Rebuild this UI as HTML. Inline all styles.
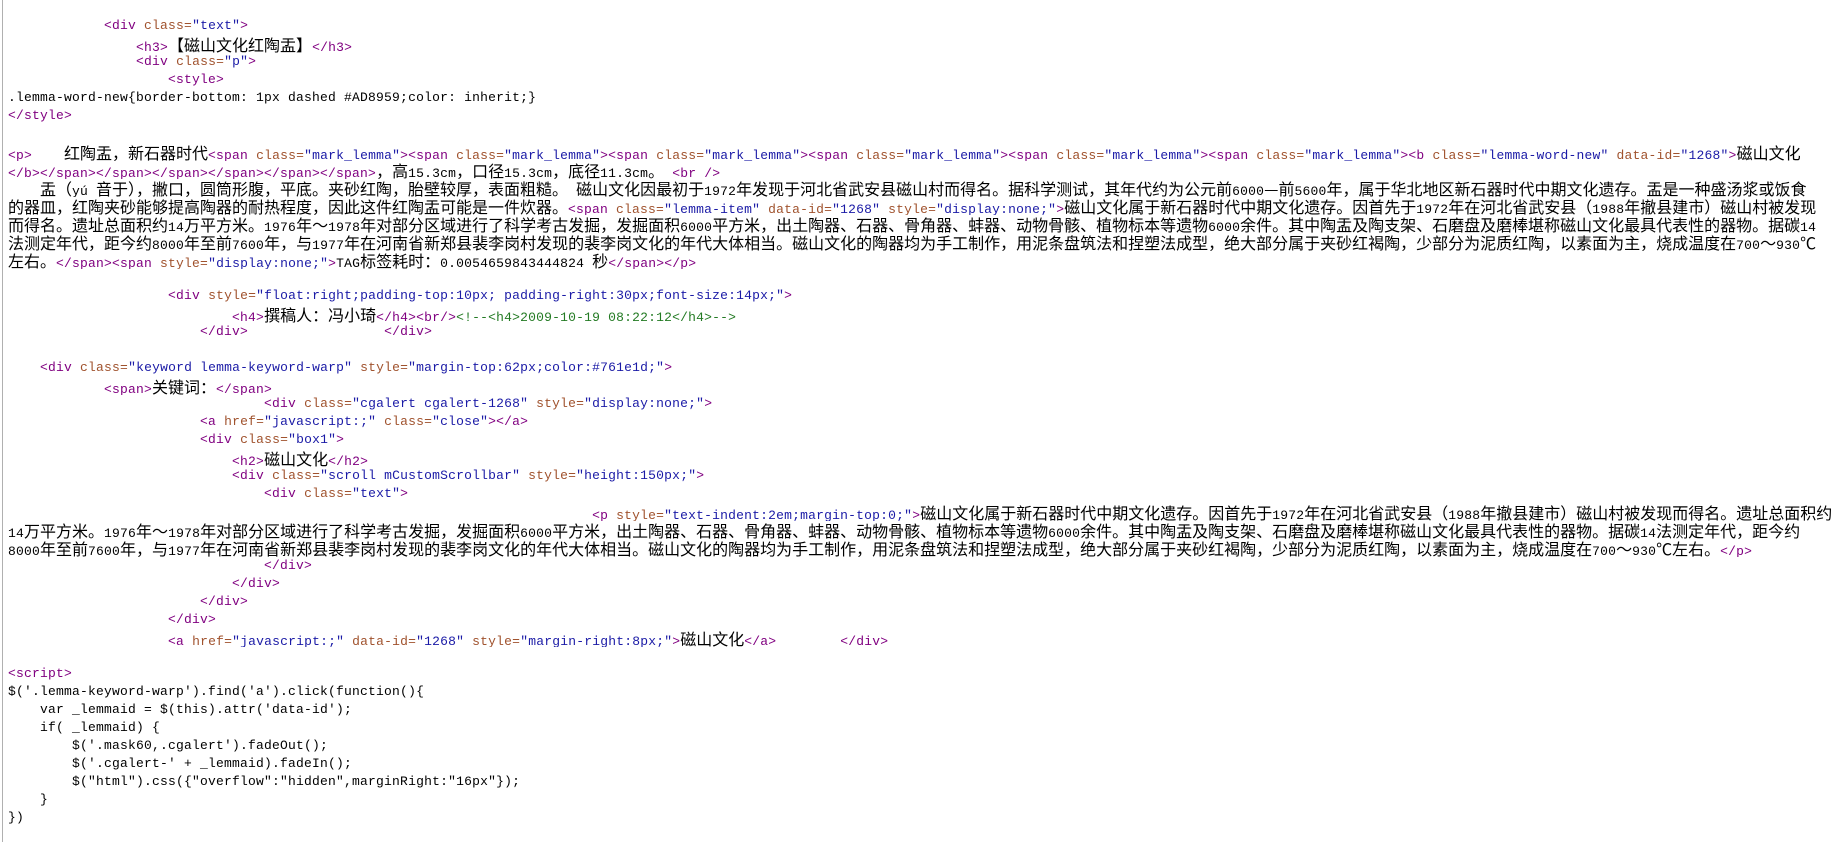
<!DOCTYPE html>
<html><head><meta charset="utf-8">
<style>
html,body{margin:0;padding:0;background:#fff;width:1844px;height:842px;overflow:hidden}
body{border-left:1px solid #b0b0b0;margin-left:2px;padding-top:17px;box-sizing:border-box}
.l{white-space:pre;height:18px;line-height:18px;font-family:"Liberation Mono",monospace;font-size:13px;letter-spacing:0.2px;color:#000;padding-left:5px;overflow:hidden}
u,s,b,em,i{text-decoration:none;font-weight:normal;font-style:normal}
u{color:#800080}
s{color:#a0522d}
b{color:#1a1aa6}
em{color:#237a23}
i{font-family:"Noto Sans CJK SC","WenQuanYi Zen Hei",sans-serif;font-size:16px;letter-spacing:0}
</style></head><body>
<div class="l">            <u>&lt;div</u> <s>class=</s><b>"text"</b><u>&gt;</u></div>
<div class="l">                <u>&lt;h3&gt;</u><i>【磁山文化红陶盂】</i><u>&lt;/h3&gt;</u></div>
<div class="l">                <u>&lt;div</u> <s>class=</s><b>"p"</b><u>&gt;</u></div>
<div class="l">                    <u>&lt;style&gt;</u></div>
<div class="l">.lemma-word-new{border-bottom: 1px dashed #AD8959;color: inherit;}</div>
<div class="l"><u>&lt;/style&gt;</u></div>
<div class="l"> </div>
<div class="l"><u>&lt;p&gt;</u>    <i>红陶盂，新石器时代</i><u>&lt;span</u> <s>class=</s><b>"mark_lemma"</b><u>&gt;&lt;span</u> <s>class=</s><b>"mark_lemma"</b><u>&gt;&lt;span</u> <s>class=</s><b>"mark_lemma"</b><u>&gt;&lt;span</u> <s>class=</s><b>"mark_lemma"</b><u>&gt;&lt;span</u> <s>class=</s><b>"mark_lemma"</b><u>&gt;&lt;span</u> <s>class=</s><b>"mark_lemma"</b><u>&gt;&lt;b</u> <s>class=</s><b>"lemma-word-new"</b> <s>data-id=</s><b>"1268"</b><u>&gt;</u><i>磁山文化</i></div>
<div class="l"><u>&lt;/b&gt;&lt;/span&gt;&lt;/span&gt;&lt;/span&gt;&lt;/span&gt;&lt;/span&gt;&lt;/span&gt;</u><i>，高</i>15.3cm<i>，口径</i>15.3cm<i>，底径</i>11.3cm<i>。</i> <u>&lt;br /&gt;</u></div>
<div class="l">    <i>盂（</i>yú <i>音于），撇口，圆筒形腹，平底。夹砂红陶，胎壁较厚，表面粗糙。</i> <i>磁山文化因最初于</i>1972<i>年发现于河北省武安县磁山村而得名。据科学测试，其年代约为公元前</i>6000<i>—前</i>5600<i>年，属于华北地区新石器时代中期文化遗存。盂是一种盛汤浆或饭食</i></div>
<div class="l"><i>的器皿，红陶夹砂能够提高陶器的耐热程度，因此这件红陶盂可能是一件炊器。</i><u>&lt;span</u> <s>class=</s><b>"lemma-item"</b> <s>data-id=</s><b>"1268"</b> <s>style=</s><b>"display:none;"</b><u>&gt;</u><i>磁山文化属于新石器时代中期文化遗存。因首先于</i>1972<i>年在河北省武安县（</i>1988<i>年撤县建市）磁山村被发现</i></div>
<div class="l"><i>而得名。遗址总面积约</i>14<i>万平方米。</i>1976<i>年～</i>1978<i>年对部分区域进行了科学考古发掘，发掘面积</i>6000<i>平方米，出土陶器、石器、骨角器、蚌器、动物骨骸、植物标本等遗物</i>6000<i>余件。其中陶盂及陶支架、石磨盘及磨棒堪称磁山文化最具代表性的器物。据碳</i>14</div>
<div class="l"><i>法测定年代，距今约</i>8000<i>年至前</i>7600<i>年，与</i>1977<i>年在河南省新郑县裴李岗村发现的裴李岗文化的年代大体相当。磁山文化的陶器均为手工制作，用泥条盘筑法和捏塑法成型，绝大部分属于夹砂红褐陶，少部分为泥质红陶，以素面为主，烧成温度在</i>700<i>～</i>930<i>℃</i></div>
<div class="l"><i>左右。</i><u>&lt;/span&gt;&lt;span</u> <s>style=</s><b>"display:none;"</b><u>&gt;</u>TAG<i>标签耗时：</i>0.0054659843444824 <i>秒</i><u>&lt;/span&gt;&lt;/p&gt;</u></div>
<div class="l"> </div>
<div class="l">                    <u>&lt;div</u> <s>style=</s><b>"float:right;padding-top:10px; padding-right:30px;font-size:14px;"</b><u>&gt;</u></div>
<div class="l">                            <u>&lt;h4&gt;</u><i>撰稿人：冯小琦</i><u>&lt;/h4&gt;&lt;br/&gt;</u><em>&lt;!--&lt;h4&gt;2009-10-19 08:22:12&lt;/h4&gt;--&gt;</em></div>
<div class="l">                        <u>&lt;/div&gt;</u>                 <u>&lt;/div&gt;</u></div>
<div class="l"> </div>
<div class="l">    <u>&lt;div</u> <s>class=</s><b>"keyword lemma-keyword-warp"</b> <s>style=</s><b>"margin-top:62px;color:#761e1d;"</b><u>&gt;</u></div>
<div class="l">            <u>&lt;span&gt;</u><i>关键词：</i><u>&lt;/span&gt;</u></div>
<div class="l">                                <u>&lt;div</u> <s>class=</s><b>"cgalert cgalert-1268"</b> <s>style=</s><b>"display:none;"</b><u>&gt;</u></div>
<div class="l">                        <u>&lt;a</u> <s>href=</s><b>"javascript:;"</b> <s>class=</s><b>"close"</b><u>&gt;&lt;/a&gt;</u></div>
<div class="l">                        <u>&lt;div</u> <s>class=</s><b>"box1"</b><u>&gt;</u></div>
<div class="l">                            <u>&lt;h2&gt;</u><i>磁山文化</i><u>&lt;/h2&gt;</u></div>
<div class="l">                            <u>&lt;div</u> <s>class=</s><b>"scroll mCustomScrollbar"</b> <s>style=</s><b>"height:150px;"</b><u>&gt;</u></div>
<div class="l">                                <u>&lt;div</u> <s>class=</s><b>"text"</b><u>&gt;</u></div>
<div class="l">                                                                         <u>&lt;p</u> <s>style=</s><b>"text-indent:2em;margin-top:0;"</b><u>&gt;</u><i>磁山文化属于新石器时代中期文化遗存。因首先于</i>1972<i>年在河北省武安县（</i>1988<i>年撤县建市）磁山村被发现而得名。遗址总面积约</i></div>
<div class="l">14<i>万平方米。</i>1976<i>年～</i>1978<i>年对部分区域进行了科学考古发掘，发掘面积</i>6000<i>平方米，出土陶器、石器、骨角器、蚌器、动物骨骸、植物标本等遗物</i>6000<i>余件。其中陶盂及陶支架、石磨盘及磨棒堪称磁山文化最具代表性的器物。据碳</i>14<i>法测定年代，距今约</i></div>
<div class="l">8000<i>年至前</i>7600<i>年，与</i>1977<i>年在河南省新郑县裴李岗村发现的裴李岗文化的年代大体相当。磁山文化的陶器均为手工制作，用泥条盘筑法和捏塑法成型，绝大部分属于夹砂红褐陶，少部分为泥质红陶，以素面为主，烧成温度在</i>700<i>～</i>930<i>℃左右。</i><u>&lt;/p&gt;</u></div>
<div class="l">                                <u>&lt;/div&gt;</u></div>
<div class="l">                            <u>&lt;/div&gt;</u></div>
<div class="l">                        <u>&lt;/div&gt;</u></div>
<div class="l">                    <u>&lt;/div&gt;</u></div>
<div class="l">                    <u>&lt;a</u> <s>href=</s><b>"javascript:;"</b> <s>data-id=</s><b>"1268"</b> <s>style=</s><b>"margin-right:8px;"</b><u>&gt;</u><i>磁山文化</i><u>&lt;/a&gt;</u>        <u>&lt;/div&gt;</u></div>
<div class="l"> </div>
<div class="l"><u>&lt;script&gt;</u></div>
<div class="l">$('.lemma-keyword-warp').find('a').click(function(){</div>
<div class="l">    var _lemmaid = $(this).attr('data-id');</div>
<div class="l">    if( _lemmaid) {</div>
<div class="l">        $('.mask60,.cgalert').fadeOut();</div>
<div class="l">        $('.cgalert-' + _lemmaid).fadeIn();</div>
<div class="l">        $("html").css({"overflow":"hidden",marginRight:"16px"});</div>
<div class="l">    }</div>
<div class="l">})</div>
</body></html>
